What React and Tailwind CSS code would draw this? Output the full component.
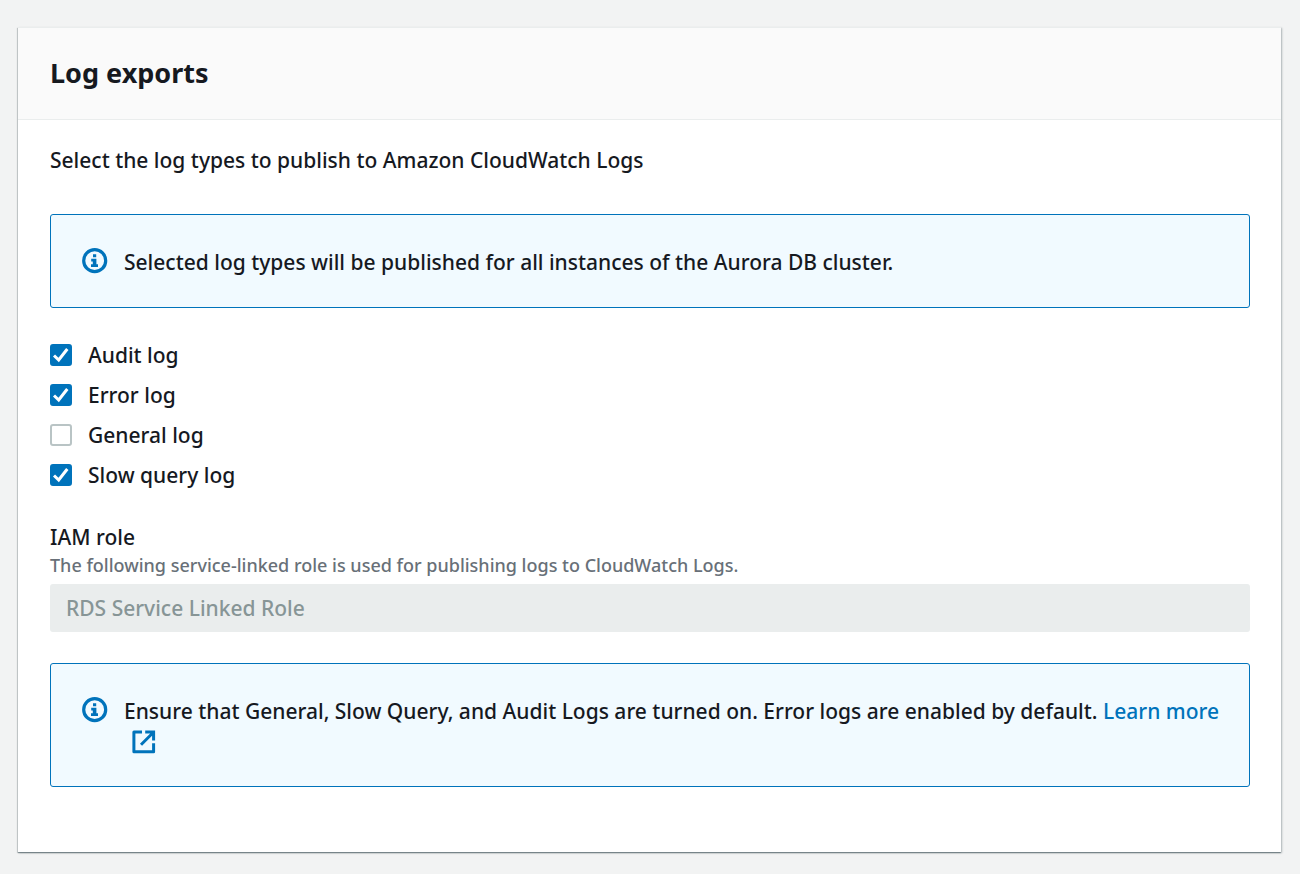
import React from 'react';

const logTypes = [
  { id: 'audit', label: 'Audit log', checked: true },
  { id: 'error', label: 'Error log', checked: true },
  { id: 'general', label: 'General log', checked: false },
  { id: 'slow-query', label: 'Slow query log', checked: true },
];

function InfoIcon() {
  return (
    <svg aria-hidden="true" viewBox="0 0 26 26" className="mt-px size-[26px] shrink-0">
      <circle cx="12.7" cy="12.7" r="11" fill="none" stroke="#0073bb" strokeWidth="3.2" />
      <path fill="#0073bb" d="M11 6.2h3.2v3H11zM9.2 10.8h5.2v5.4H16v2.8H9v-2.8h1.8v-2.8H9.2z" />
    </svg>
  );
}

function ExternalIcon() {
  return (
    <svg aria-hidden="true" viewBox="0 0 24 24" className="ml-2 inline-block size-6 align-[-5px]" fill="none" stroke="#0073bb" strokeWidth="3">
      <path strokeLinejoin="round" d="M10 2.1H1.9v19.7h19.7V13.2" />
      <path d="M13.2 2.1h8.4V10.5M21 2.7L9 14.7" />
    </svg>
  );
}

function Alert({ children }) {
  return (
    <div className="flex gap-4 rounded-[3px] border border-[#0073bb] bg-[#f1faff] pt-8 pr-6 pb-[30px] pl-[31px]">
      <InfoIcon />
      <p className="min-w-0 flex-1">{children}</p>
    </div>
  );
}

function LogCheckbox({ id, label, checked }) {
  return (
    <li className="flex items-center gap-4">
      <span className="grid size-[22px] place-items-center">
        <input
          id={id}
          type="checkbox"
          defaultChecked={checked}
          className="peer col-start-1 row-start-1 size-[22px] appearance-none rounded-[3px] border-2 border-[#b9c4c5] bg-white checked:border-[#0073bb] checked:bg-[#0073bb]"
        />
        <svg
          aria-hidden="true"
          viewBox="0 0 22 22"
          className="pointer-events-none invisible col-start-1 row-start-1 size-[22px] peer-checked:visible"
          fill="none"
          stroke="white"
          strokeWidth="3"
        >
          <path d="M4 11.5L8.7 16L17.3 5" />
        </svg>
      </span>
      <label htmlFor={id}>{label}</label>
    </li>
  );
}

export default function App() {
  return (
    <main className="min-h-screen bg-[#f2f3f3] pt-[27px] pr-[19px] pb-[21px] pl-[18px] font-['Noto_Sans',sans-serif] text-[21px] leading-[30px] font-medium text-[#16191f]">
      <section className="border-t border-[#eaeded] bg-white shadow-[0_1px_1px_0_rgba(0,28,36,0.3),1px_1px_2px_0_rgba(0,28,36,0.25),-1px_1px_1px_0_rgba(0,28,36,0.15)]">
        <header className="border-b border-[#eaeded] bg-[#fafafa] px-8 pt-[27px] pb-7">
          <h1 className="text-[27px] leading-9 font-bold">Log exports</h1>
        </header>
        <div className="pt-[25px] pr-[31px] pb-[65px] pl-8">
          <p>Select the log types to publish to Amazon CloudWatch Logs</p>
          <div className="mt-[39px]">
            <Alert>Selected log types will be published for all instances of the Aurora DB cluster.</Alert>
          </div>
          <ul className="mt-8 flex flex-col gap-[10px]">
            {logTypes.map((type) => (
              <LogCheckbox key={type.id} {...type} />
            ))}
          </ul>
          <div className="mt-8">
            <label htmlFor="iam-role" className="block">IAM role</label>
            <p id="iam-role-hint" className="text-[18px] leading-[26px] text-[#687078]">
              The following service-linked role is used for publishing logs to CloudWatch Logs.
            </p>
            <input
              id="iam-role"
              type="text"
              disabled
              value="RDS Service Linked Role"
              readOnly
              aria-describedby="iam-role-hint"
              className="mt-[6px] block h-12 w-full rounded-[3px] bg-[#eaeded] px-4 text-[#879596]"
            />
          </div>
          <div className="mt-[31px]">
            <Alert>
              Ensure that General, Slow Query, and Audit Logs are turned on. Error logs are enabled by default.{' '}
              <a href="#learn-more" className="text-[#0073bb]">
                Learn more <ExternalIcon />
              </a>
            </Alert>
          </div>
        </div>
      </section>
    </main>
  );
}
